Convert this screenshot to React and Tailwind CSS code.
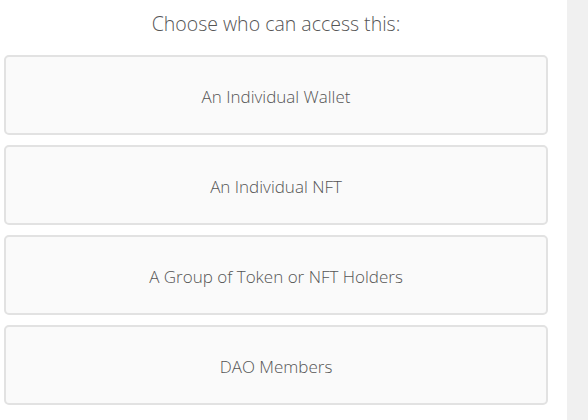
const options = [
  'An Individual Wallet',
  'An Individual NFT',
  'A Group of Token or NFT Holders',
  'DAO Members',
]

export default function App() {
  return (
    <div className="flex h-[420px] w-[588px] overflow-hidden bg-white" style={{ fontFamily: '"Open Sans", "Noto Sans", sans-serif' }}>
      <div className="w-[567px] px-[4px]">
        <h2 className="w-[544px] pt-[9px] text-center text-[19.5px] font-light leading-[30px] text-[#555]">
          Choose who can access this:
        </h2>
        <div className="mt-[16px] flex w-[544px] flex-col gap-[10px]">
          {options.map((label) => (
            <button
              key={label}
              className="flex h-[80px] items-center justify-center rounded-[5px] border-2 border-[#e2e2e2] bg-[#fafafa] pt-[3px] text-[17px] font-light text-[#555]"
            >
              {label}
            </button>
          ))}
        </div>
      </div>
      <div className="flex-1 bg-[#f0f0f0]" />
    </div>
  )
}
